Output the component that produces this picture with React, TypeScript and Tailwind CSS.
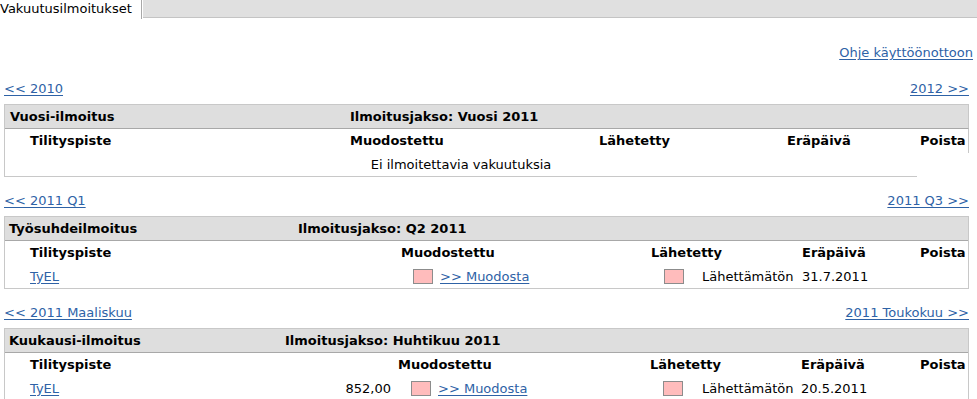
import React from 'react';

const link = 'text-[#2e62a6] underline underline-offset-2';

function PinkBox() {
    return <span className="inline-block w-[20px] h-[15px] bg-[#ffbcbc] border border-[#8c8c8c]" />;
}

function NavRow({ prev, next }: { prev: string; next: string }) {
    return (
        <div className="flex justify-between h-[16px] items-center">
            <a href="#" className={link}>{prev}</a>
            <a href="#" className={link}>{next}</a>
        </div>
    );
}

export default function App() {
    return (
        <div className="w-[977px] h-[399px] overflow-hidden bg-white text-[13px] leading-[16px] text-black" style={{ fontFamily: '"DejaVu Sans", Verdana, sans-serif' }}>
            {/* Tabs */}
            <div className="flex items-start">
                <div className="w-[142px] h-[19px] border-r border-[#a8a8a8] pt-[1px] whitespace-nowrap">Vakuutusilmoitukset</div>
                <div className="flex-1 ml-[1px] h-[18px] bg-[#e0e0e0] border-b border-[#c4c4c4]" />
            </div>

            <div className="pl-[4px] pr-[8px]">
                <div className="flex justify-end h-[16px] items-center mt-[26px] mr-[-4px]">
                    <a href="#" className={link}>Ohje käyttöönottoon</a>
                </div>

                {/* Vuosi-ilmoitus */}
                <div className="mt-[20px]">
                    <NavRow prev="<< 2010" next="2012 >>" />
                </div>
                <div className="mt-[7px] border-l border-t border-[#c8c8c8]">
                    <div className="flex h-[24px] items-center bg-[#dedede] border-r border-r-[#c8c8c8] border-b border-b-[#a8a8a8] font-bold">
                        <div className="w-[345px] pl-[5px]">Vuosi-ilmoitus</div>
                        <div>Ilmoitusjakso: Vuosi 2011</div>
                    </div>
                    <div className="flex h-[24px] items-center border-r border-[#c8c8c8] font-bold">
                        <div className="w-[345px] pl-[25px]">Tilityspiste</div>
                        <div className="w-[249px]">Muodostettu</div>
                        <div className="w-[188px]">Lähetetty</div>
                        <div className="w-[133px]">Eräpäivä</div>
                        <div>Poista</div>
                    </div>
                    <div className="w-[912px] h-[24px] flex items-center justify-center border-b border-[#c8c8c8]">
                        Ei ilmoitettavia vakuutuksia
                    </div>
                </div>

                {/* Työsuhdeilmoitus */}
                <div className="mt-[16px]">
                    <NavRow prev="<< 2011 Q1" next="2011 Q3 >>" />
                </div>
                <div className="mt-[7px] border border-[#c8c8c8]">
                    <div className="flex h-[24px] items-center bg-[#dedede] border-b border-[#a8a8a8] font-bold">
                        <div className="w-[293px] pl-[4px]">Työsuhdeilmoitus</div>
                        <div>Ilmoitusjakso: Q2 2011</div>
                    </div>
                    <div className="flex h-[24px] items-center font-bold">
                        <div className="w-[396px] pl-[25px]">Tilityspiste</div>
                        <div className="w-[250px]">Muodostettu</div>
                        <div className="w-[151px]">Lähetetty</div>
                        <div className="w-[118px]">Eräpäivä</div>
                        <div>Poista</div>
                    </div>
                    <div className="flex h-[23px] items-center">
                        <div className="w-[396px] pl-[25px]"><a href="#" className={link}>TyEL</a></div>
                        <div className="w-[250px] pl-[12px] flex items-center gap-[7px]">
                            <PinkBox />
                            <a href="#" className={link}>&gt;&gt; Muodosta</a>
                        </div>
                        <div className="w-[151px] pl-[13px] flex items-center gap-[18px] whitespace-nowrap">
                            <PinkBox />
                            <span>Lähettämätön</span>
                        </div>
                        <div className="w-[118px]">31.7.2011</div>
                        <div />
                    </div>
                </div>

                {/* Kuukausi-ilmoitus */}
                <div className="mt-[16px]">
                    <NavRow prev="<< 2011 Maaliskuu" next="2011 Toukokuu >>" />
                </div>
                <div className="mt-[7px] border border-[#c8c8c8]">
                    <div className="flex h-[24px] items-center bg-[#dedede] border-b border-[#a8a8a8] font-bold">
                        <div className="w-[280px] pl-[4px]">Kuukausi-ilmoitus</div>
                        <div>Ilmoitusjakso: Huhtikuu 2011</div>
                    </div>
                    <div className="flex h-[24px] items-center font-bold">
                        <div className="w-[393px] pl-[25px]">Tilityspiste</div>
                        <div className="w-[252px]">Muodostettu</div>
                        <div className="w-[151px]">Lähetetty</div>
                        <div className="w-[119px]">Eräpäivä</div>
                        <div>Poista</div>
                    </div>
                    <div className="flex h-[23px] items-center">
                        <div className="w-[393px] pl-[25px] pr-[7px] flex justify-between">
                            <a href="#" className={link}>TyEL</a>
                            <span>852,00</span>
                        </div>
                        <div className="w-[252px] pl-[13px] flex items-center gap-[7px]">
                            <PinkBox />
                            <a href="#" className={link}>&gt;&gt; Muodosta</a>
                        </div>
                        <div className="w-[151px] pl-[13px] flex items-center gap-[19px] whitespace-nowrap">
                            <PinkBox />
                            <span>Lähettämätön</span>
                        </div>
                        <div className="w-[119px]">20.5.2011</div>
                        <div />
                    </div>
                </div>
            </div>
        </div>
    );
}
